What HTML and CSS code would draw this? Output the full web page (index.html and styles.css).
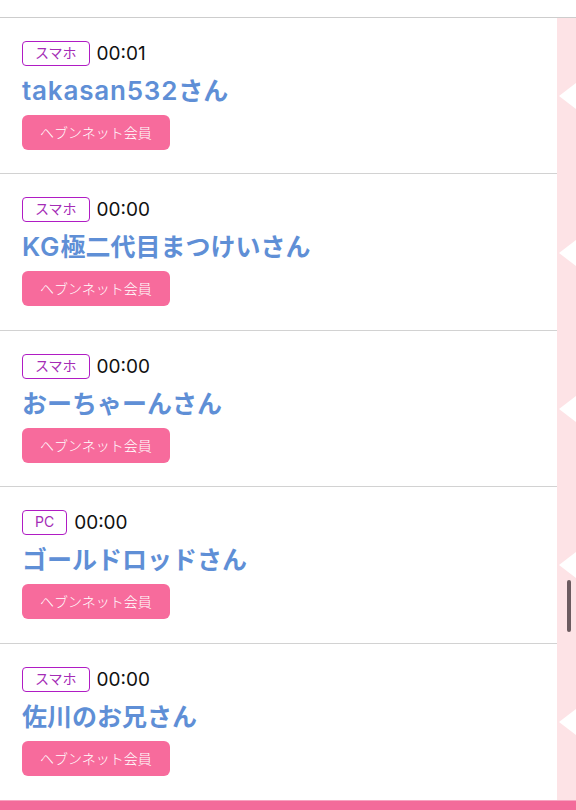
FILE: index.html
```html
<!DOCTYPE html>
<html lang="ja">
<head>
  <meta charset="UTF-8" />
  <meta name="viewport" content="width=device-width, initial-scale=1.0" />
  <title>足あと</title>
  <link rel="stylesheet" href="styles.css">
</head>
<body>
  <div class="top"></div>

  <ul class="list">
    <li class="row">
      <div class="entry">
        <div class="meta"><span class="device">スマホ</span><span class="time">00:01</span></div>
        <div class="name"><span class="latin">takasan532</span>さん</div>
        <span class="member">ヘブンネット会員</span>
      </div>
      <div class="tab"></div>
    </li>
    <li class="row">
      <div class="entry">
        <div class="meta"><span class="device">スマホ</span><span class="time">00:00</span></div>
        <div class="name"><span class="latin">KG</span>極二代目まつけいさん</div>
        <span class="member">ヘブンネット会員</span>
      </div>
      <div class="tab"></div>
    </li>
    <li class="row">
      <div class="entry">
        <div class="meta"><span class="device">スマホ</span><span class="time">00:00</span></div>
        <div class="name">おーちゃーんさん</div>
        <span class="member">ヘブンネット会員</span>
      </div>
      <div class="tab"></div>
    </li>
    <li class="row">
      <div class="entry">
        <div class="meta"><span class="device">PC</span><span class="time">00:00</span></div>
        <div class="name">ゴールドロッドさん</div>
        <span class="member">ヘブンネット会員</span>
      </div>
      <div class="tab"></div>
    </li>
    <li class="row">
      <div class="entry">
        <div class="meta"><span class="device">スマホ</span><span class="time">00:00</span></div>
        <div class="name">佐川のお兄さん</div>
        <span class="member">ヘブンネット会員</span>
      </div>
      <div class="tab"></div>
    </li>
  </ul>

  <div class="bottom"></div>
  <div class="scroll-thumb"></div>
</body>
</html>
```

FILE: styles.css
```css
html, body {
  margin: 0;
  padding: 0;
}
body {
  font-family: Inter, "Noto Sans CJK JP", sans-serif;
  background: #fff;
  width: 576px;
  height: 810px;
  overflow: hidden;
  position: relative;
}
.top {
  height: 17px;
  border-bottom: 1px solid #cdcdcd;
}
.list {
  list-style: none;
  margin: 0;
  padding: 0;
}
.row {
  display: flex;
  height: 156.4px;
}
.entry {
  flex: 1;
  padding: 23px 0 0 22px;
  border-bottom: 1px solid #d2d2d2;
}
.row:last-child .entry {
  border-bottom: none;
}
.tab {
  width: 19px;
  background: #fde3e6;
  position: relative;
}
.tab::before {
  content: "";
  position: absolute;
  right: 0;
  top: 50%;
  margin-top: -13px;
  border-style: solid;
  border-width: 13px 17px 13px 0;
  border-color: transparent #fff transparent transparent;
}
.meta {
  display: flex;
  align-items: center;
  height: 25px;
}
.device {
  box-sizing: border-box;
  height: 25px;
  line-height: 22px;
  padding: 0 12px;
  border: 1.5px solid #b01cc4;
  border-radius: 4px;
  color: #a52cb6;
  font-size: 14px;
}
.time {
  margin-left: 7px;
  font-size: 19px;
  color: #111;
}
.name {
  margin: 6px 0 5px;
  height: 38px;
  line-height: 38px;
  font-size: 25px;
  font-weight: 600;
  color: #5f8fd6;
}
.latin {
  font-size: 26px;
  letter-spacing: 0.8px;
}
.member {
  display: inline-block;
  height: 35px;
  line-height: 35px;
  padding: 0 18px;
  border-radius: 6px;
  background: #f76b9c;
  color: #fff;
  font-size: 14px;
  font-weight: 300;
}
.bottom {
  position: absolute;
  left: 0;
  right: 0;
  bottom: 0;
  height: 9px;
  background: #f36b9a;
  border-top: 1px solid #f7a3c0;
}
.scroll-thumb {
  position: absolute;
  left: 567px;
  top: 580px;
  width: 4px;
  height: 52px;
  border-radius: 2px;
  background: #6c5b60;
}
```
